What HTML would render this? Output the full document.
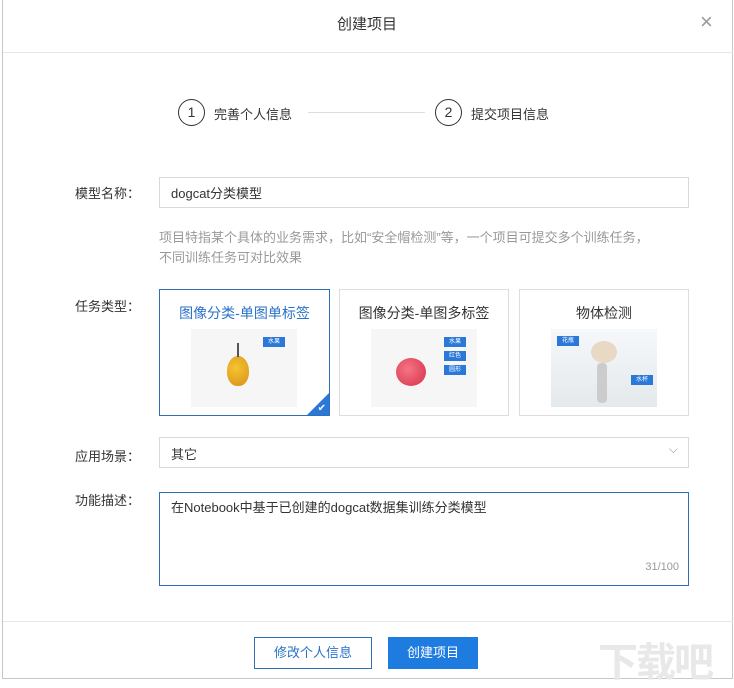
<!DOCTYPE html>
<html><head><meta charset="utf-8"><style>
*{margin:0;padding:0;box-sizing:border-box}
body{width:734px;height:681px;background:#fff;font-family:"Liberation Sans","Noto Sans CJK SC",sans-serif;font-size:13px;color:#333;position:relative;overflow:hidden}
.frame{position:absolute;left:2px;top:0;width:731px;height:679px;border:1px solid #c8c8c8;border-top:none}
.a{position:absolute}
.lbl{position:absolute;left:75px;font-size:13px;color:#333}
.box{position:absolute;left:159px;width:530px;border:1px solid #d9d9d9;background:#fff}
.card{position:absolute;top:289px;height:127px;border:1px solid #ddd;text-align:center;font-size:14px;padding-top:13px;color:#333}
.tag{position:absolute;background:#2a78d8;color:#fff;font-size:6px;width:22px;height:10px;line-height:10px;text-align:center}
.circ{position:absolute;width:27px;height:27px;border:1px solid #333;border-radius:50%;text-align:center;line-height:25px;font-size:14px}
</style></head><body>
<div class="frame"></div>
<div class="a" style="left:0;width:734px;top:13px;text-align:center;font-size:15px;color:#333">创建项目</div>
<div class="a" style="left:700px;top:9px;font-size:22px;color:#999">×</div>
<div class="a" style="left:3px;width:730px;top:52px;height:1px;background:#e6e6e6"></div>
<div class="circ" style="left:178px;top:99px">1</div>
<div class="a" style="left:214px;top:104px;font-size:13px">完善个人信息</div>
<div class="a" style="left:308px;top:112px;width:117px;height:1px;background:#ddd"></div>
<div class="circ" style="left:435px;top:99px">2</div>
<div class="a" style="left:471px;top:104px;font-size:13px">提交项目信息</div>
<div class="lbl" style="top:183px">模型名称：</div>
<div class="box" style="top:177px;height:31px;padding:5px 11px;font-size:13px">dogcat分类模型</div>
<div class="a" style="left:159px;top:228px;font-size:13px;color:#999;line-height:20px;width:530px">项目特指某个具体的业务需求，比如“安全帽检测”等，一个项目可提交多个训练任务，<br>不同训练任务可对比效果</div>
<div class="lbl" style="top:296px">任务类型：</div>
<div class="card" style="left:159px;width:171px;border:1px solid #2f6fb3;color:#2a72c8">图像分类-单图单标签
<div class="a" style="left:31px;top:39px;width:106px;height:78px;background:#f6f6f6">
<div class="a" style="left:36px;top:27px;width:22px;height:30px;border-radius:50% 50% 45% 45%;background:radial-gradient(circle at 40% 40%,#f4c430,#d9901a)"></div>
<div class="a" style="left:46px;top:14px;width:2px;height:14px;background:#555"></div>
<div class="tag" style="left:72px;top:8px">水果</div></div>
<div class="a" style="right:0;bottom:0;width:0;height:0;border-left:22px solid transparent;border-bottom:22px solid #2a78d8"></div>
<div class="a" style="right:3px;bottom:1px;color:#fff;font-size:10px">✔</div>
</div>
<div class="card" style="left:339px;width:170px">图像分类-单图多标签
<div class="a" style="left:31px;top:39px;width:106px;height:78px;background:#f6f6f6">
<div class="a" style="left:25px;top:29px;width:30px;height:28px;border-radius:50%;background:radial-gradient(circle at 40% 40%,#f47585,#d8304a)"></div>
<div class="tag" style="left:73px;top:8px">水果</div><div class="tag" style="left:73px;top:22px">红色</div><div class="tag" style="left:73px;top:36px">圆形</div></div></div>
<div class="card" style="left:519px;width:170px">物体检测
<div class="a" style="left:31px;top:39px;width:106px;height:78px;background:linear-gradient(#f6f8fa,#e4e9ec)">
<div class="a" style="left:40px;top:12px;width:26px;height:22px;border-radius:50%;background:#e8d8c4"></div>
<div class="a" style="left:46px;top:34px;width:10px;height:40px;background:#ccc;border-radius:4px"></div>
<div class="tag" style="left:6px;top:7px">花瓶</div><div class="tag" style="left:80px;top:46px">水杯</div></div></div>
<div class="lbl" style="top:446px">应用场景：</div>
<div class="box" style="top:437px;height:31px;padding:6px 11px">其它<span class="a" style="right:10px;top:4px;color:#999;font-size:12px">⌵</span></div>
<div class="lbl" style="top:490px">功能描述：</div>
<div class="box" style="top:492px;height:94px;border-color:#2f6fb3;padding:4px 11px">在Notebook中基于已创建的dogcat数据集训练分类模型<span class="a" style="right:9px;bottom:12px;font-size:11px;color:#999">31/100</span></div>
<div class="a" style="left:3px;width:730px;top:621px;height:1px;background:#e6e6e6"></div>
<div class="a" style="left:254px;top:637px;width:118px;height:32px;border:1px solid #2f6fb3;color:#2a72c8;text-align:center;line-height:30px">修改个人信息</div>
<div class="a" style="left:388px;top:637px;width:90px;height:32px;background:#1e7be0;color:#fff;text-align:center;line-height:32px">创建项目</div>
<div class="a" style="left:598px;top:630px;font-size:40px;color:#e8e8e8;font-weight:bold;letter-spacing:-2px">下载吧</div>
</body></html>
